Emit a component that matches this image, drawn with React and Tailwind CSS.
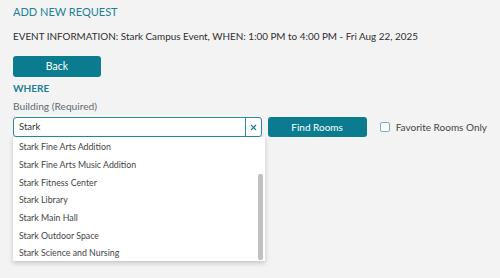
import { X } from 'lucide-react';

const buildings = [
  'Stark Fine Arts Addition',
  'Stark Fine Arts Music Addition',
  'Stark Fitness Center',
  'Stark Library',
  'Stark Main Hall',
  'Stark Outdoor Space',
  'Stark Science and Nursing',
];

const App = () => {
  return (
    <div className="w-[500px] h-[278px] bg-[#f3f3f3] overflow-hidden font-['Lato',sans-serif] px-[13px] pt-[5px]">
      <h1 className="text-[11px] leading-[14px] text-[#1b8196]">ADD NEW REQUEST</h1>

      <p className="mt-[10px] text-[9.9px] leading-[14px] text-[#2e2e2e] whitespace-nowrap">
        EVENT INFORMATION: Stark Campus Event, WHEN: 1:00 PM to 4:00 PM - Fri Aug 22, 2025
      </p>

      <button className="mt-[13px] w-[88px] h-[21px] rounded-[3px] bg-[#0b7b90] text-white text-[10.5px] block">
        Back
      </button>

      <h2 className="mt-[4px] text-[10px] leading-[14px] font-bold text-[#1b8196]">WHERE</h2>

      <label className="block mt-[4px] text-[10.2px] leading-[14px] text-[#5f6b74]">
        Building (Required)
      </label>

      <div className="flex items-center mt-[4px]">
        <div className="relative w-[251px]">
          {/* search box */}
          <div className="flex h-[20px] border border-[#2a8a9c] rounded-[3px] bg-white">
            <span className="flex-1 pl-[5px] text-[9.5px] leading-[18px] text-[#333]">Stark</span>
            <span className="w-[16px] border-l border-[#2a8a9c] flex items-center justify-center">
              <X className="w-[9px] h-[9px] text-[#1b7c90]" strokeWidth={3} />
            </span>
          </div>

          {/* options list */}
          <div className="absolute left-0 top-[20px] w-[252px] h-[124px] bg-white shadow-[0_2px_5px_rgba(0,0,0,0.2)] flex">
            <ul className="flex-1 pt-[1px]">
              {buildings.map((b) => (
                <li key={b} className="h-[17.7px] flex items-center pl-[6px] text-[8.8px] text-[#444]">
                  {b}
                </li>
              ))}
            </ul>
            <div className="w-[9px] flex flex-col pt-[37px] pb-[1px] pl-[2px]">
              <div className="flex-1 w-[5px] rounded-[2px] bg-[#c1c1c1]" />
            </div>
          </div>
        </div>

        <button className="ml-[6px] w-[100px] h-[20px] rounded-[3px] bg-[#0b7b90] text-white text-[10px]">
          Find Rooms
        </button>

        <label className="flex items-center ml-[13px] text-[10px] text-[#444] whitespace-nowrap">
          <span className="w-[10px] h-[10px] border border-[#74b4c2] rounded-[2px] bg-white" />
          <span className="ml-[6px]">Favorite Rooms Only</span>
        </label>
      </div>
    </div>
  );
};

export default App;
